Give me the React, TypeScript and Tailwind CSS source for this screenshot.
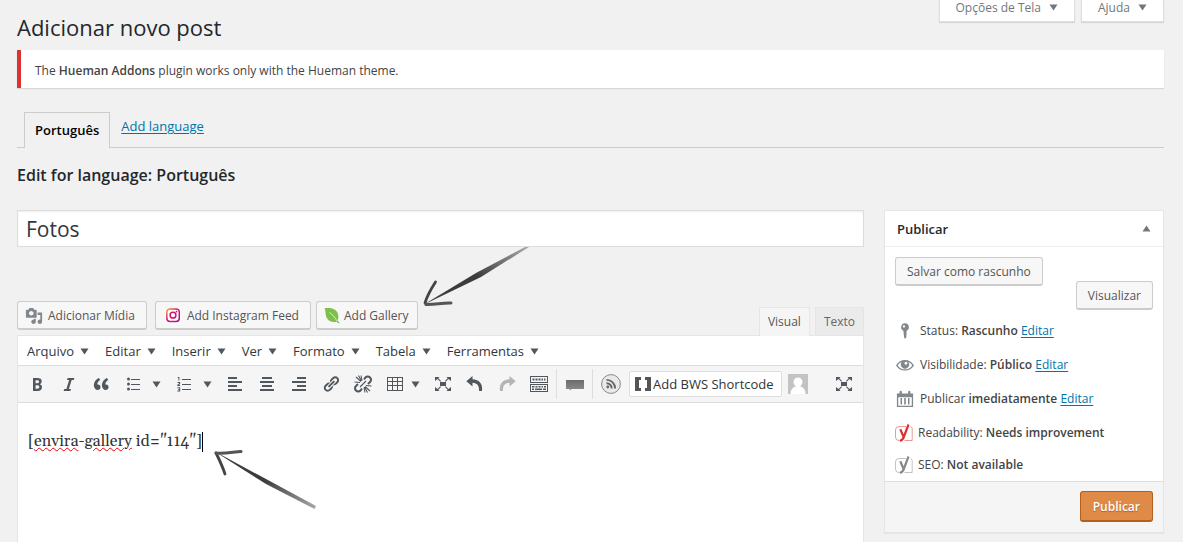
import { useState, type ReactNode } from "react"

const ICONS = {
  bold: "M6 4v13h4.54c1.37 0 2.46-.33 3.26-1 .8-.66 1.2-1.58 1.2-2.77 0-.84-.17-1.51-.51-2.01s-.9-.85-1.67-1.03v-.09c.57-.1 1.02-.4 1.36-.9s.51-1.13.51-1.91c0-1.14-.39-1.98-1.17-2.5C12.75 4.26 11.5 4 9.78 4H6zm2.57 5.15V6.26h1.36c.73 0 1.27.11 1.61.32.34.22.51.58.51 1.07 0 .54-.16.92-.47 1.15s-.82.35-1.51.35h-1.5zm0 2.19h1.6c1.44 0 2.16.53 2.16 1.61 0 .6-.17 1.05-.51 1.34s-.86.43-1.57.43H8.57v-3.38z",
  italic: "M14.78 6h-2.13l-2.8 9h2.12l-.62 2H4.6l.62-2h2.14l2.8-9H8.03l.62-2h6.75z",
  quote:
    "M9.49 13.22c0-.74-.2-1.38-.61-1.9-.62-.78-1.83-.88-2.53-.72-.29-1.65 1.11-3.75 2.92-4.65L7.88 4c-2.73 1.3-5.42 4.28-4.96 8.05C3.21 14.43 4.59 16 6.54 16c.85 0 1.56-.25 2.12-.75s.83-1.18.83-2.03zm8.05 0c0-.74-.2-1.38-.61-1.9-.63-.78-1.83-.88-2.53-.72-.29-1.65 1.11-3.75 2.92-4.65L15.93 4c-2.73 1.3-5.41 4.28-4.95 8.05.29 2.38 1.66 3.95 3.61 3.95.85 0 1.56-.25 2.12-.75s.83-1.18.83-2.03z",
  bullets:
    "M5.5 3.5a1.5 1.5 0 1 1 0 3a1.5 1.5 0 0 1 0-3zM5.5 8.5a1.5 1.5 0 1 1 0 3a1.5 1.5 0 0 1 0-3zM5.5 13.5a1.5 1.5 0 1 1 0 3a1.5 1.5 0 0 1 0-3zM8 5h9v1H8zM8 10h9v1H8zM8 15h9v1H8z",
  numbers:
    "M4 3h1.4v3.5H4.4V4H3.5zM3.5 8h2.7v2l-1.5 1h1.5v1H3.3v-1.3l1.7-1.2V9H3.5zM3.5 13.3h2.7v4.2H3.3v-.9h1.9v-.8H4V15h1.2v-.8H3.5zM8 5h9v1H8zM8 10h9v1H8zM8 15h9v1H8z",
  left: "M3 3h9v2H3zM3 7h14v2H3zM3 11h9v2H3zM3 15h14v2H3z",
  center: "M5 3h10v2H5zM3 7h14v2H3zM5 11h10v2H5zM3 15h14v2H3z",
  right: "M8 3h9v2H8zM3 7h14v2H3zM8 11h9v2H8zM3 15h14v2H3z",
  link: "M17.74 2.76c1.68 1.69 1.68 4.41 0 6.1l-1.53 1.52c-1.12 1.12-2.7 1.47-4.14 1.09l2.62-2.61.76-.77.76-.76c.84-.84.84-2.2 0-3.04-.84-.85-2.2-.85-3.04 0l-.77.76-3.38 3.38c-.37-1.44-.02-3.02 1.1-4.14l1.52-1.53c1.69-1.68 4.42-1.68 6.1 0zM8.59 13.43l5.34-5.34c.42-.42.42-1.1 0-1.52-.44-.43-1.13-.39-1.53 0l-5.33 5.34c-.42.42-.42 1.1 0 1.52.44.43 1.13.39 1.52 0zm-.76 2.29l4.14-4.15c.38 1.44.03 3.02-1.09 4.14l-1.52 1.53c-1.69 1.68-4.41 1.68-6.1 0-1.68-1.68-1.68-4.42 0-6.1l1.53-1.52c1.12-1.12 2.7-1.47 4.14-1.1l-4.14 4.15c-.85.84-.85 2.2 0 3.05.84.84 2.2.84 3.04 0z",
  table: "M2 3h16v14H2zM3 4v3h4V4zM8 4v3h4V4zM13 4v3h4V4zM3 8v3h4V8zM8 8v3h4V8zM13 8v3h4V8zM3 12v4h4v-4zM8 12v4h4v-4zM13 12v4h4v-4z",
  expand:
    "M7 8h6v4H7zM2 3h4.500L5.300 4.300 8 7 7.300 7.700 4.500 5 2 7zM18 3v4l-2.500-2-2.800 2.700L12 7l2.700-2.700L13.500 3zM2 17v-4l2.500 2 2.800-2.700.7.7-2.700 2.700L6.500 17zM18 17h-4.500l1.200-1.300L12 13l.7-.7 2.800 2.700 2.500-2z",
  undo: "M7.500 2v3.300C14 5.600 18 9.500 17 17h-3c.4-5-1.700-8-6.500-8.200V12.500L1.300 7.200z",
  redo: "M12.500 2v3.300C6 5.600 2 9.500 3 17h3c-.4-5 1.700-8 6.500-8.200v3.700l6.200-5.300z",
  kitchen:
    "M1 2h18v7H1zM2 3v5h16V3zM3.500 4.500h2v2h-2zM6.500 4.500h2v2h-2zM9.500 4.500h2v2h-2zM12.500 4.500h1.500v2h-1.500zM15 4.500h1.500v2H15zM1 10h18v8H1zM2 11v6h16v-6zM3 12h2.500v1.500H3zM6.500 12h2v1.500h-2zM9.500 12h2v1.500h-2zM12.500 12H14v1.500h-1.500zM15 12h2v1.500h-2zM3 14.500h2V16H3zM6 14.500h7V16H6zM14 14.500h3V16h-3z",
  media:
    "M13 11V4c0-.55-.45-1-1-1h-1.67L9 1H5L3.67 3H2c-.55 0-1 .45-1 1v7c0 .55.45 1 1 1h10c.55 0 1-.45 1-1zM7 4.5c1.38 0 2.5 1.12 2.5 2.5S8.38 9.5 7 9.5 4.5 8.38 4.5 7 5.62 4.5 7 4.5zM14 6h5v10.5c0 1.38-1.12 2.5-2.5 2.5S14 17.88 14 16.5s1.12-2.5 2.5-2.5c.17 0 .34.02.5.05V9h-3V6zm-4 8.05V13h2v3.5c0 1.38-1.12 2.5-2.5 2.5S7 17.88 7 16.5 8.12 14 9.5 14c.17 0 .34.02.5.05z",
  eye: "M0 10.500C2.500 6.500 6 4.500 10 4.500s7.500 2 10 6c-2.500 4-6 5.700-10 5.700S2.500 14.500 0 10.500zM1.900 10.500c2 3 4.800 4.300 8.100 4.300s6.100-1.300 8.100-4.300c-1.200-1.900-2.700-3.100-4.400-3.800a4.600 4.600 0 1 1-7.400 0c-1.700.7-3.200 1.900-4.400 3.800zM11 6.500a1.600 1.600 0 1 0 .1 0z",
  pin: "M10 1.500a4.300 4.300 0 0 1 1.800 8.200l-.3 7.300L10 19l-1-2-.8-7.300A4.300 4.300 0 0 1 10 1.500zM8.800 3.500a1.300 1.300 0 1 0 .1 0z",
  calendar:
    "M1 4h3V2.200a1 1 0 0 1 2.500 0V4h7V2.200a1 1 0 0 1 2.500 0V4h3v15H1zM2.500 8v9.500h15V8zM5 9h1.700v7H5zM9.100 9h1.800v7H9.100zM13.300 9H15v7h-1.700z",
}

type IconName = keyof typeof ICONS

function Icon({ name, className = "" }: { name: IconName; className?: string }) {
  return (
    <svg className={`w-5 h-5 shrink-0 ${className}`} viewBox="0 0 20 20" fill="currentColor" aria-hidden="true">
      <path fillRule="evenodd" d={ICONS[name]} />
    </svg>
  )
}

function Caret({ up = false }: { up?: boolean }) {
  return (
    <svg className="w-[9px] h-[7px] shrink-0" viewBox="0 0 9 7" fill="currentColor" aria-hidden="true">
      <path d={up ? "M4.500 0.500L8.500 6.500h-8z" : "M.5.5h8l-4 6z"} />
    </svg>
  )
}

function UnlinkIcon() {
  return (
    <svg className="w-5 h-5" viewBox="0 0 20 20" fill="none" stroke="currentColor" aria-hidden="true">
      <path strokeWidth="2" d="M11 5.500l1.500-2a3 3 0 0 1 4.500 0a3 3 0 0 1 0 4.500L15 10" />
      <path strokeWidth="2" d="M9 14.500l-1.500 2a3 3 0 0 1-4.500 0a3 3 0 0 1 0-4.500l2-2" />
      <path strokeWidth="1.100" d="M1.500 8L7 8.500M3 3l5 4.500M8 1.500l1 5M18.500 12L13 11.500M17 17l-5-4.500M12 18.500l-1-5M7 13l6-6M14.500 18.500L11.500 13M5.500 1.500L8.500 7" />
    </svg>
  )
}

function InstagramIcon() {
  return (
    <svg className="w-4 h-4 shrink-0" viewBox="0 0 16 16" fill="none" aria-hidden="true">
      <defs>
        <linearGradient id="insta" x1="0" y1="0" x2="1" y2="1">
          <stop offset="0" stopColor="#f7a531" />
          <stop offset="0.4" stopColor="#d81c72" />
          <stop offset="1" stopColor="#a5128f" />
        </linearGradient>
      </defs>
      <rect width="16" height="16" fill="#fff" />
      <rect x="1.800" y="0.900" width="12.500" height="12.500" rx="3.200" stroke="url(#insta)" strokeWidth="1.500" />
      <circle cx="8" cy="7.200" r="2.900" stroke="#cf1573" strokeWidth="1.500" />
      <circle cx="11.500" cy="3.700" r="0.900" fill="#cf1573" />
    </svg>
  )
}

function LeafIcon() {
  return (
    <svg className="w-4 h-4 shrink-0" viewBox="0 0 16 16" aria-hidden="true">
      <path fill="#7cc04b" d="M.5.3C7-.6 12.500 1 14 6c.7 2.700.2 5-.3 6.400.6 1 1.300 2 2.300 3.200-1.400-.3-2.300-1-3.300-1.900C8.500 14.500 4.500 13.500 2.500 9.500 1.200 6.500 2 3 .5.3z" />
      <path fill="none" stroke="#f7f7f7" strokeWidth="0.800" d="M5.500 4.500c3 2 5.500 5 7.500 8.500" />
    </svg>
  )
}

function YoastIcon({ className }: { className: string }) {
  return (
    <svg className={`w-[18px] h-[18px] shrink-0 ${className}`} viewBox="0 0 18 18" fill="none" stroke="currentColor" aria-hidden="true">
      <path strokeOpacity="0.500" d="M11 2.500H4A3.500 3.500 0 0 0 .5 6v7A3.500 3.500 0 0 0 4 16.500h1M15.500 2.600c1 .3 1.700 1.200 1.700 2.400v11.500H9.500" />
      <path strokeWidth="2.200" d="M5.300 5.200l3 7M13.500.5L9 12.500c-.8 2.200-1.600 4-4 4.200" />
    </svg>
  )
}

function SmallButton({ children, className = "" }: { children: ReactNode; className?: string }) {
  return (
    <button
      type="button"
      className={`flex items-center h-[29px] pt-[2px] bg-[#f7f7f7] border border-[#ccc] border-b-2 rounded-[3px] text-[#555] whitespace-nowrap ${className}`}
    >
      {children}
    </button>
  )
}

function ToolButton({ label, children }: { label: string; children: ReactNode }) {
  return (
    <button type="button" aria-label={label} className="flex items-center justify-center w-8 h-8 shrink-0">
      {children}
    </button>
  )
}

function CaretButton({ label, className }: { label: string; className: string }) {
  return (
    <button type="button" aria-label={label} className={`flex items-center h-8 shrink-0 ${className}`}>
      <Caret />
    </button>
  )
}

function EditLink() {
  return (
    <a href="#" className="text-[#0073aa] underline underline-offset-2">
      Editar
    </a>
  )
}

const menus = ["Arquivo", "Editar", "Inserir", "Ver", "Formato", "Tabela", "Ferramentas"]

function Toolbar() {
  return (
    <div className="flex items-center h-[37px] px-[3px] bg-[#f5f5f5] border-b border-[#ddd] text-[#50575e]">
      <ToolButton label="Negrito"><Icon name="bold" /></ToolButton>
      <ToolButton label="Itálico"><Icon name="italic" /></ToolButton>
      <ToolButton label="Citação"><Icon name="quote" /></ToolButton>
      <ToolButton label="Lista com marcadores"><Icon name="bullets" /></ToolButton>
      <CaretButton label="Estilos de marcadores" className="w-[19px] pl-[3px]" />
      <ToolButton label="Lista numerada"><Icon name="numbers" /></ToolButton>
      <CaretButton label="Estilos de numeração" className="w-[19px] pl-[3px]" />
      <ToolButton label="Alinhar à esquerda"><Icon name="left" /></ToolButton>
      <ToolButton label="Centralizar"><Icon name="center" /></ToolButton>
      <ToolButton label="Alinhar à direita"><Icon name="right" /></ToolButton>
      <ToolButton label="Inserir link"><Icon name="link" className="p-px" /></ToolButton>
      <ToolButton label="Remover link"><UnlinkIcon /></ToolButton>
      <ToolButton label="Tabela"><Icon name="table" /></ToolButton>
      <CaretButton label="Opções da tabela" className="w-4" />
      <ToolButton label="Tela cheia"><Icon name="expand" /></ToolButton>
      <ToolButton label="Desfazer"><Icon name="undo" /></ToolButton>
      <ToolButton label="Refazer"><Icon name="redo" className="opacity-40" /></ToolButton>
      <ToolButton label="Alternar barra"><Icon name="kitchen" /></ToolButton>
      <span className="w-px h-[30px] bg-[#ddd] ml-px mr-[2px]" />
      <ToolButton label="Comentário">
        <svg className="w-5 h-5" viewBox="0 0 20 20" aria-hidden="true">
          <defs>
            <linearGradient id="bubble" x1="0" y1="0" x2="0" y2="1">
              <stop offset="0" stopColor="#6b6b6b" />
              <stop offset="1" stopColor="#8d8d8d" />
            </linearGradient>
          </defs>
          <path fill="url(#bubble)" d="M1 6h18v9H6.500L5 16.500 4.500 15H1z" />
        </svg>
      </ToolButton>
      <span className="w-px h-[30px] bg-[#ddd] ml-px mr-[2px]" />
      <ToolButton label="RSS">
        <svg className="w-5 h-5" viewBox="0 0 20 20" fill="none" stroke="#666" aria-hidden="true">
          <circle cx="10" cy="10" r="9.400" fill="#e9e9e9" stroke="#888" />
          <circle cx="6.800" cy="13" r="1.400" fill="#666" stroke="none" />
          <path strokeWidth="1.900" d="M5.500 9.300a5 5 0 0 1 5.200 5.200M5.500 5.900a8.500 8.500 0 0 1 8.700 8.600" />
        </svg>
      </ToolButton>
      <button
        type="button"
        className="flex items-center gap-px h-[26px] ml-[2px] pl-1 pr-[7px] bg-white border border-[#ddd] rounded-[2px] text-[13px] text-[#333] whitespace-nowrap"
      >
        <svg className="w-[18px] h-4 text-[#555]" viewBox="0 0 18 16" fill="currentColor" aria-hidden="true">
          <path d="M1 1h6v3H5v8h2v3H1zM17 1h-6v3h2v8h-2v3h6z" />
        </svg>
        Add BWS Shortcode
      </button>
      <ToolButton label="Autor">
        <svg className="w-5 h-5" viewBox="0 0 20 20" aria-hidden="true">
          <path fill="#c3c3c3" d="M0 0h20v20H0z" />
          <circle cx="10" cy="8" r="4.500" fill="#fff" />
          <path fill="#fff" d="M2.500 20c0-4.500 2.500-7 6-8h3c3.500 1 6 3.500 6 8z" />
        </svg>
      </ToolButton>
      <span className="grow" />
      <ToolButton label="Modo sem distrações"><Icon name="expand" /></ToolButton>
    </div>
  )
}

function Editor() {
  return (
    <div className="grow flex flex-col bg-white border border-b-0 border-[#e5e5e5]">
      <div className="flex items-center h-[30px] border-b border-[#ddd] text-[13px]">
        {menus.map((menu) => (
          <button key={menu} type="button" className="flex items-center gap-[6px] pl-[9px] pr-[7px] text-[#32373c]">
            {menu}
            <span className="flex pt-px text-[#50575e]">
              <Caret />
            </span>
          </button>
        ))}
      </div>
      <Toolbar />
      <div className="relative grow">
        <div
          role="textbox"
          aria-label="Conteúdo"
          aria-multiline="true"
          contentEditable
          suppressContentEditableWarning
          spellCheck={false}
          className="h-full px-[10px] pt-6 outline-none font-[Georgia,Gelasio,'Liberation_Serif',serif] text-base leading-7 text-[#333]"
        >
          <p>
            [<span className="underline decoration-wavy decoration-red-600 decoration-1">envira</span>-
            <span className="underline decoration-wavy decoration-red-600 decoration-1">gallery</span> id="114"]
            <span className="inline-block w-px h-5 bg-black align-middle" />
          </p>
        </div>
        <svg className="absolute left-[192px] top-[44px] w-[108px] h-[66px] pointer-events-none" viewBox="0 0 108 66" fill="none" aria-hidden="true">
          <defs>
            <linearGradient id="arrowLow" x1="0" y1="0" x2="1" y2="1">
              <stop offset="0.500" stopColor="#3c3c3c" />
              <stop offset="1" stopColor="#aaa" />
            </linearGradient>
          </defs>
          <path fill="url(#arrowLow)" d="M4 4L106 59l-1.500 3L56 37z" />
          <path stroke="#444" strokeWidth="2.800" strokeLinecap="round" d="M6 6c3 6 6 12 9 21" />
          <path stroke="#555" strokeWidth="3" strokeLinecap="round" d="M6 6c8 1 17-1 25-1.500" />
        </svg>
      </div>
    </div>
  )
}

function PublishBox() {
  return (
    <section className="w-[280px] shrink-0 self-start bg-white border border-[#e5e5e5] shadow-[0_1px_1px_rgba(0,0,0,0.04)]">
      <div className="flex items-center justify-between h-9 px-3 border-b border-[#eee]">
        <h2 className="text-[13px] font-semibold text-[#23282d]">Publicar</h2>
        <button type="button" aria-label="Alternar painel" className="text-[#72777c]">
          <Caret up />
        </button>
      </div>
      <div className="px-[10px] pt-[10px]">
        <div className="flex items-start justify-between h-14">
          <SmallButton className="px-[11px]">Salvar como rascunho</SmallButton>
          <SmallButton className="px-[11px] mt-6">Visualizar</SmallButton>
        </div>
        <div className="flex items-center gap-[5px] h-[34px] pt-[2px]">
          <Icon name="pin" className="p-px text-[#82878c]" />
          <p>Status: <b className="font-semibold">Rascunho</b> <EditLink /></p>
        </div>
        <div className="flex items-center gap-[5px] h-[34px] pt-[2px]">
          <Icon name="eye" className="p-px text-[#82878c]" />
          <p>Visibilidade: <b className="font-semibold">Público</b> <EditLink /></p>
        </div>
        <div className="flex items-center gap-[5px] h-[34px] pt-[2px]">
          <Icon name="calendar" className="p-px text-[#82878c]" />
          <p>Publicar <b className="font-semibold">imediatamente</b> <EditLink /></p>
        </div>
        <div className="flex items-center gap-[5px] h-[33px] pt-[2px]">
          <YoastIcon className="text-[#dc3232]" />
          <p>Readability: <b className="font-semibold">Needs improvement</b></p>
        </div>
        <div className="flex items-center gap-[5px] h-[33px]">
          <YoastIcon className="text-[#888]" />
          <p>SEO: <b className="font-semibold">Not available</b></p>
        </div>
      </div>
      <div className="flex justify-end p-[10px] pt-[9px] bg-[#f5f5f5] border-t border-[#ddd]">
        <button
          type="submit"
          className="h-[31px] px-3 pt-[2px] bg-[#e08a48] border border-[#b0611e] border-b-2 rounded-[3px] font-semibold text-white [text-shadow:0_1px_1px_#b0611e]"
        >
          Publicar
        </button>
      </div>
    </section>
  )
}

export default function App() {
  const [title, setTitle] = useState("Fotos")

  return (
    <div className="h-screen overflow-hidden flex flex-col pl-[17px] pr-[19px] bg-[#f1f1f1] font-['Segoe_UI','Open_Sans',sans-serif] text-xs leading-5 text-[#444]">
      <header className="flex items-start justify-between h-[50px] shrink-0">
        <h1 className="pt-[11px] text-[22px] leading-8 text-[#23282d]">Adicionar novo post</h1>
        <div className="flex gap-[6px] text-[#72777c]">
          <button type="button" className="flex items-center gap-2 h-[22px] px-4 pb-[6px] bg-white border border-t-0 border-[#ddd] shadow-[0_1px_1px_rgba(0,0,0,0.1)]">
            Opções de Tela <Caret />
          </button>
          <button type="button" className="flex items-center gap-2 h-[22px] px-4 pb-[6px] bg-white border border-t-0 border-[#ddd] shadow-[0_1px_1px_rgba(0,0,0,0.1)]">
            Ajuda <Caret />
          </button>
        </div>
      </header>

      <div className="flex items-center h-[38px] shrink-0 pt-1 pl-[14px] bg-white border-l-4 border-[#dc3232] shadow-[0_1px_1px_rgba(0,0,0,0.1)]">
        <p>The <b className="font-semibold">Hueman Addons</b> plugin works only with the Hueman theme.</p>
      </div>

      <nav className="flex items-end h-[60px] shrink-0 pl-[7px] border-b border-[#ccc] text-[13px]">
        <a href="#" className="h-9 -mb-px px-[10px] pt-[7px] bg-[#f1f1f1] border border-b-0 border-[#ccc] font-semibold text-black">
          Português
        </a>
        <a href="#" className="h-[31px] px-[11px] font-medium text-[#0073aa] underline underline-offset-2">
          Add language
        </a>
      </nav>

      <h2 className="pt-[15px] h-[62px] shrink-0 text-base leading-6 font-semibold text-[#23282d]">
        Edit for language: Português
      </h2>

      <div className="flex gap-5 grow">
        <div className="grow min-w-0 flex flex-col">
          <input
            type="text"
            aria-label="Título"
            value={title}
            onChange={(e) => setTitle(e.target.value)}
            className="w-full h-[37px] px-2 pt-px bg-white border border-[#ddd] shadow-[inset_0_1px_2px_rgba(0,0,0,0.07)] text-[21px] text-[#32373c] outline-none"
          />
          <div className="relative flex justify-between pt-[54px]">
            <div className="flex pb-[5px]">
              <SmallButton className="gap-1 pl-[6px] pr-[11px]">
                <Icon name="media" className="p-px text-[#82878c]" />
                Adicionar Mídia
              </SmallButton>
              <SmallButton className="gap-[6px] ml-2 pl-[9px] pr-[11px]">
                <InstagramIcon />
                Add Instagram Feed
              </SmallButton>
              <SmallButton className="gap-1 ml-[5px] pl-[7px] pr-[9px]">
                <LeafIcon />
                Add Gallery
              </SmallButton>
            </div>
            <div className="flex items-end gap-[5px]">
              <button type="button" className="relative h-[29px] -mb-px px-2 bg-[#f5f5f5] border border-b-0 border-[#e5e5e5] text-[#555]">
                Visual
              </button>
              <button type="button" className="h-7 px-2 bg-[#ebebeb] border border-b-0 border-[#e5e5e5] text-[#666]">
                Texto
              </button>
            </div>
            <svg className="absolute left-[402px] top-0 w-[112px] h-[62px] pointer-events-none" viewBox="0 0 112 62" fill="none" aria-hidden="true">
              <defs>
                <linearGradient id="arrowTop" x1="0" y1="1" x2="1" y2="0">
                  <stop offset="0.500" stopColor="#3c3c3c" />
                  <stop offset="1" stopColor="#aaa" />
                </linearGradient>
              </defs>
              <path fill="url(#arrowTop)" d="M4 58L57 26 106 0h4L62 30z" />
              <path stroke="#444" strokeWidth="2.800" strokeLinecap="round" d="M6 56c2-7 6-14 10.500-21" />
              <path stroke="#555" strokeWidth="3" strokeLinecap="round" d="M7 57.500c8 .5 17-2 25-1.500" />
            </svg>
          </div>
          <Editor />
        </div>
        <PublishBox />
      </div>
    </div>
  )
}
